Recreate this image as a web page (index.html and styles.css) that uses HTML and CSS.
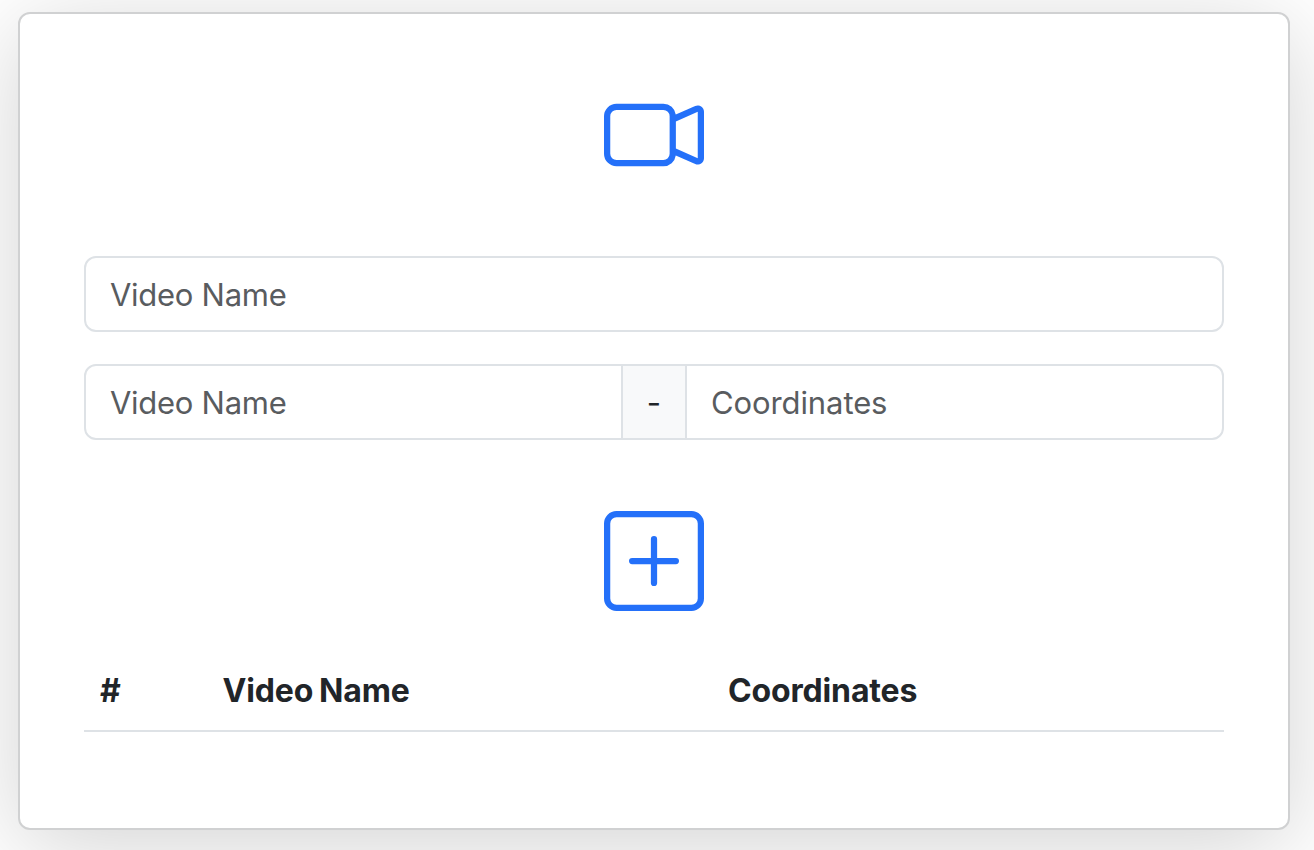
FILE: index.html
```html
<!DOCTYPE html>
<html lang="en">
<head>
<meta charset="utf-8">
<title>Videos</title>
<link rel="stylesheet" href="styles.css">
</head>
<body>
<main class="card">
  <svg class="icon icon-video" viewBox="0 0 16 16" fill="currentColor"><path fill-rule="evenodd" d="M0 5a2 2 0 0 1 2-2h7.500a2 2 0 0 1 1.983 1.738l3.110-1.382A1 1 0 0 1 16 4.269v7.462a1 1 0 0 1-1.406.913l-3.111-1.382A2 2 0 0 1 9.500 13H2a2 2 0 0 1-2-2zm11.500 5.175 3.500 1.556V4.269l-3.500 1.556zM2 4a1 1 0 0 0-1 1v6a1 1 0 0 0 1 1h7.500a1 1 0 0 0 1-1V5a1 1 0 0 0-1-1z"/></svg>
  <input class="field field-name" type="text" placeholder="Video Name">
  <div class="group">
    <input class="field field-name group-start" type="text" placeholder="Video Name">
    <span class="separator">-</span>
    <input class="field group-end" type="text" placeholder="Coordinates">
  </div>
  <svg class="icon icon-add" viewBox="0 0 16 16" fill="currentColor"><path d="M14 1a1 1 0 0 1 1 1v12a1 1 0 0 1-1 1H2a1 1 0 0 1-1-1V2a1 1 0 0 1 1-1zM2 0a2 2 0 0 0-2 2v12a2 2 0 0 0 2 2h12a2 2 0 0 0 2-2V2a2 2 0 0 0-2-2z"/><path d="M8 4a.5.5 0 0 1 .5.5v3h3a.5.5 0 0 1 0 1h-3v3a.5.5 0 0 1-1 0v-3h-3a.5.5 0 0 1 0-1h3v-3A.5.5 0 0 1 8 4"/></svg>
  <div class="table-head">
    <span class="col-index">#</span>
    <span class="col-name">Video Name</span>
    <span class="col-coords">Coordinates</span>
  </div>
</main>
</body>
</html>
```
FILE: styles.css
```css
* { box-sizing: border-box; }
body {
  margin: 0;
  height: 850px;
  padding: 12px 24px 20px 18px;
  overflow: hidden;
  background: #fff;
  color: #212529;
  font: 31px/48px Inter, "Liberation Sans", sans-serif;
}
.card {
  display: flex;
  flex-direction: column;
  height: 818px;
  padding: 71px 64px 0;
  border: 2px solid #d0d1d2;
  border-radius: 12px;
  background: #fff;
  box-shadow: 0 16px 96px rgba(0, 0, 0, .175);
}
.icon { display: block; flex: none; align-self: center; width: 100px; height: 100px; color: #2470f9; }
.icon-video { margin-bottom: 71px; }
.field {
  width: 100%;
  height: 76px;
  padding: 12px 24px;
  border: 2px solid #dee2e6;
  border-radius: 12px;
  outline: 0;
  background: #fff;
  color: inherit;
  font: inherit;
  letter-spacing: -.1px;
}
.field-name { letter-spacing: -.28px; }
.field::placeholder { color: #595c5f; opacity: 1; }
.group { display: flex; margin: 32px 0 71px; }
.group .field { flex: 1 1 0; min-width: 0; }
.group-start { border-radius: 12px 0 0 12px; }
.group-end { border-radius: 0 12px 12px 0; }
.separator {
  width: 66px;
  margin: 0 -2px;
  padding: 13px 0 11px;
  border: 2px solid #dee2e6;
  background: #f8f9fa;
  text-align: center;
  z-index: 1;
}
.table-head {
  display: grid;
  grid-template-columns: 122.500px 505.500px 1fr;
  height: 82px;
  margin-top: 39px;
  padding: 17px 16px 0;
  border-bottom: 2px solid #dee2e6;
  font-size: 32px;
  font-weight: 700;
  letter-spacing: -.15px;
}
.col-name { word-spacing: -1.500px; }
```
